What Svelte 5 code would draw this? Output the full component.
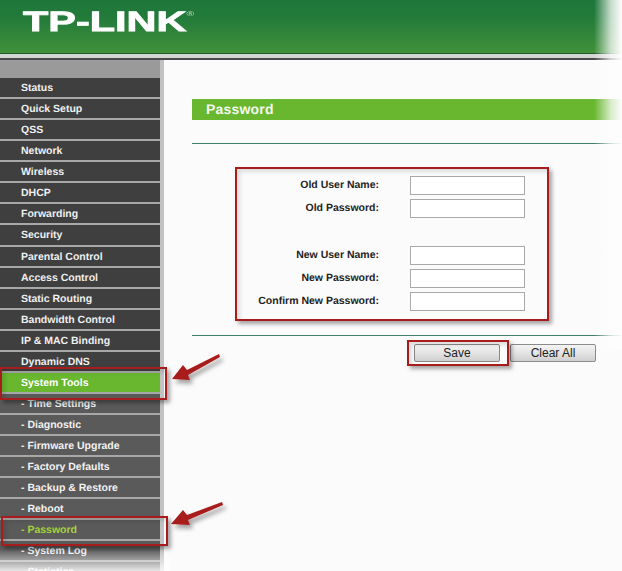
<script>
	const menu = [
		{ label: 'Status' },
		{ label: 'Quick Setup' },
		{ label: 'QSS' },
		{ label: 'Network' },
		{ label: 'Wireless' },
		{ label: 'DHCP' },
		{ label: 'Forwarding' },
		{ label: 'Security' },
		{ label: 'Parental Control' },
		{ label: 'Access Control' },
		{ label: 'Static Routing' },
		{ label: 'Bandwidth Control' },
		{ label: 'IP & MAC Binding' },
		{ label: 'Dynamic DNS' },
		{ label: 'System Tools', active: true },
		{ label: '- Time Settings', sub: true },
		{ label: '- Diagnostic', sub: true },
		{ label: '- Firmware Upgrade', sub: true },
		{ label: '- Factory Defaults', sub: true },
		{ label: '- Backup & Restore', sub: true },
		{ label: '- Reboot', sub: true },
		{ label: '- Password', sub: true, current: true },
		{ label: '- System Log', sub: true },
		{ label: '- Statistics', sub: true }
	];

	const oldFields = ['Old User Name:', 'Old Password:'];
	const newFields = ['New User Name:', 'New Password:', 'Confirm New Password:'];
</script>

<div class="page">
	<header class="top">
		<div class="logo">TP-LINK<span class="reg">®</span></div>
	</header>
	<div class="strip"></div>

	<div class="main">
		<nav class="side">
			<div class="side-head"></div>
			{#each menu as item}
				<div class="item" class:sub={item.sub} class:active={item.active} class:current={item.current}>{item.label}</div>
			{/each}
		</nav>

		<section class="content">
			<h1 class="title">Password</h1>
			<div class="rule"></div>

			<form class="form">
				{#each oldFields as f}
					<label class="lbl" for={f}>{f}</label>
					<input class="field" id={f} />
				{/each}
				<div class="gap"></div>
				{#each newFields as f}
					<label class="lbl" for={f}>{f}</label>
					<input class="field" id={f} />
				{/each}
			</form>

			<div class="rule second"></div>
			<div class="buttons">
				<button type="button">Save</button>
				<button type="button">Clear All</button>
			</div>
		</section>
	</div>

	<!-- callouts drawn on top of the screenshot -->
	<div class="mark m-tools"></div>
	<div class="mark m-pass"></div>
	<div class="mark m-form"></div>
	<div class="mark m-save"></div>

	<svg class="arrows" width="622" height="571" viewBox="0 0 622 571">
		<defs>
			<filter id="sh" x="-30%" y="-30%" width="170%" height="170%">
				<feDropShadow dx="3" dy="4" stdDeviation="2" flood-color="#000" flood-opacity="0.35" />
			</filter>
		</defs>
		<path filter="url(#sh)" fill="#a81c1c" d="M219 354 L187 370 L183 365 L172 379 L190 380 L188 375 L220 357 Z" />
		<path filter="url(#sh)" fill="#a81c1c" d="M222 502 L187 515 L183 510 L171 524 L190 525 L188 520 L223 505 Z" />
	</svg>

	<div class="fade-right"></div>
	<div class="fade-bottom"></div>
</div>

<style>
	:global(body) {
		margin: 0;
		overflow: hidden;
		background: #fff;
	}

	.page {
		position: relative;
		width: 622px;
		height: 571px;
		overflow: hidden;
		font-family: "Liberation Sans", Arial, sans-serif;
		text-rendering: geometricPrecision;
		background: #fbfbfb;
	}

	.top {
		height: 53px;
		background: linear-gradient(#1f763a, #217a3a 30%, #41913a);
		border-bottom: 1px solid #1e5a2c;
	}

	.logo {
		padding: 8px 0 0 23px;
		height: 28px;
		font-size: 28px;
		line-height: 28px;
		font-weight: bold;
		color: #fff;
		-webkit-text-stroke: 0.8px #fff;
		transform: scaleX(1.48);
		transform-origin: 23px 0;
		white-space: nowrap;
	}

	.reg {
		font-size: 7px;
		line-height: 0;
		vertical-align: 15px;
		-webkit-text-stroke: 0;
		font-weight: normal;
		color: #c8dcc8;
	}

	.strip {
		height: 4px;
		background: #d4d6d2;
		border-bottom: 2px solid #4a4a4c;
	}

	.main {
		display: flex;
		height: 511px;
	}

	.side {
		width: 160px;
		flex: none;
		border-right: 4px solid #c2c2c2;
		background: #5c5c5c;
		overflow: hidden;
	}

	.side-head {
		height: 18px;
		background: #9a9a9a;
	}

	.item {
		height: 19.07px;
		line-height: 21px;
		padding-left: 21px;
		font-size: 10.5px;
		font-weight: bold;
		color: #f0f0f0;
		background: #3f3f3f;
		border-bottom: 2px solid #a8a8a8;
		white-space: nowrap;
	}

	.item.sub {
		background: #5a5a5a;
		color: #f2f2f2;
	}

	.item.active {
		background: #68b72f;
		color: #fff;
	}

	.item.current {
		color: #a6d23a;
	}

	.content {
		flex: 1;
		padding-top: 39px;
		padding-left: 28px;
		min-width: 0;
		background: #fbfbfb;
	}

	.title {
		margin: 0;
		height: 21px;
		line-height: 21px;
		padding-left: 14px;
		font-size: 14px;
		font-weight: bold;
		letter-spacing: 0.2px;
		color: #f4f8ee;
		background: #68b72f;
	}

	.rule {
		height: 1px;
		margin-top: 23px;
		background: #3f7f68;
	}

	.form {
		display: grid;
		grid-template-columns: 187px 115px;
		column-gap: 31px;
		row-gap: 4px;
		align-items: center;
		margin-top: 32px;
	}

	.gap {
		grid-column: 1 / -1;
		height: 20px;
	}

	.lbl {
		padding-bottom: 2px;
		font-size: 10.5px;
		font-weight: bold;
		color: #222;
		text-align: right;
	}

	.field {
		box-sizing: border-box;
		width: 115px;
		height: 19px;
		padding: 0;
		border: 1px solid #a9a9a9;
		background: #fff;
	}

	.second {
		margin-top: 24px;
	}

	.buttons {
		display: flex;
		gap: 10px;
		margin-top: 8px;
		padding-left: 222px;
	}

	button {
		width: 86px;
		height: 18px;
		padding: 0;
		font-family: inherit;
		font-size: 12px;
		color: #222;
		border: 1px solid #8a8a8a;
		border-radius: 2px;
		background: linear-gradient(#f4f4f4, #e2e2e2 55%, #cfcfcf);
	}

	.mark {
		position: absolute;
		box-sizing: border-box;
		border: 2px solid #a81c1c;
		box-shadow: 3px 3px 4px rgba(0, 0, 0, 0.35), inset 3px 3px 4px rgba(0, 0, 0, 0.12);
	}

	.m-tools { left: 0; top: 367px; width: 167px; height: 33px; }
	.m-pass { left: 1px; top: 516px; width: 167px; height: 30px; }
	.m-form { left: 235px; top: 167px; width: 314px; height: 154px; }
	.m-save { left: 407px; top: 340px; width: 102px; height: 26px; }

	.arrows {
		position: absolute;
		left: 0;
		top: 0;
		pointer-events: none;
	}

	.fade-right {
		position: absolute;
		right: 0;
		top: 0;
		width: 28px;
		height: 350px;
		background: linear-gradient(90deg, rgba(251, 251, 251, 0), rgba(253, 253, 253, 0.75) 60%, #fdfdfd);
	}

	.fade-bottom {
		position: absolute;
		left: 0;
		bottom: 0;
		width: 170px;
		height: 22px;
		background: linear-gradient(rgba(255, 255, 255, 0), rgba(255, 255, 255, 0.85));
	}
</style>
